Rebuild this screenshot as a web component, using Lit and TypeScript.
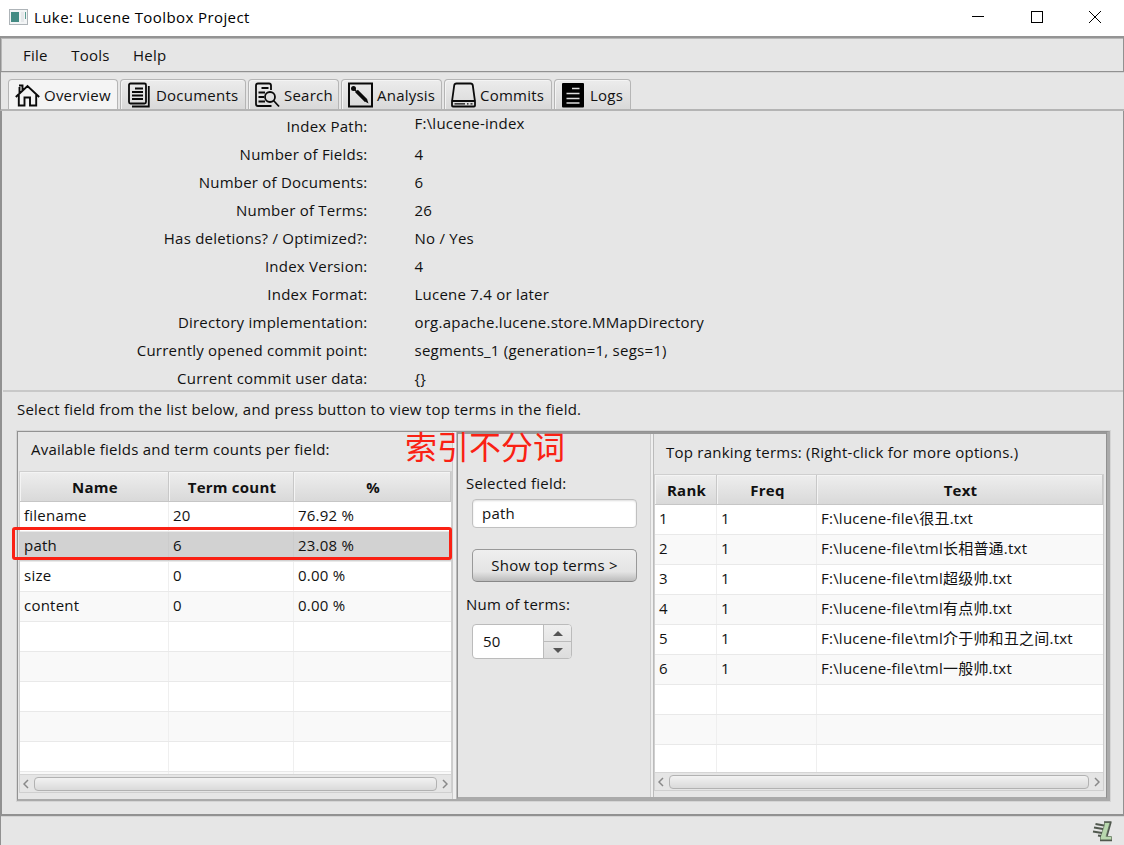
import { LitElement, html, css, svg } from "lit";
import { customElement } from "lit/decorators.js";

const house = svg`<svg width="26" height="26" viewBox="0 0 26 26" fill="none" stroke="#0a0a0a" stroke-width="1.9"><path d="M.8 15 12.500 4 24.200 15M4.500 11.500V5M7.500 8V2.500M4 3.500H8M3.800 13V23.500H9.500V15.500H15V23.500H21.200V13"/></svg>`;
const docs = svg`<svg width="26" height="26" viewBox="0 0 26 26" fill="none" stroke="#0a0a0a" stroke-width="1.8"><rect x="2" y="1.500" width="17" height="20" rx="1.500"/><path d="M21.800 4V24.500H5"/><path d="M8 6.500H16M5 10H16M5 13.500H16M5 17H16"/></svg>`;
const search = svg`<svg width="26" height="26" viewBox="0 0 26 26" fill="none" stroke="#0a0a0a" stroke-width="1.8"><path d="M16 8V3.500Q16 1.500 14 1.500H3Q1 1.500 1 3.500V22Q1 24 3 24H16.500M6.500 6H13.500M3.500 10.500H10M3.500 15H9M3.500 19.500H10"/><circle cx="15" cy="15" r="5"/><path d="M18.500 18.500 24 24.500"/></svg>`;
const analysis = svg`<svg width="26" height="26" viewBox="0 0 26 26" fill="none" stroke="#0a0a0a"><rect x="1" y="1.500" width="23" height="23" stroke-width="2"/><path d="M8.500 9 18 18.500" stroke-width="3.800"/><path d="M16 19 20.500 21.500 19 17Z" fill="#0a0a0a" stroke="none"/><circle cx="5.500" cy="6.500" r="2.500" fill="#0a0a0a" stroke="none"/><path d="M5.500 6.500 9 10" stroke-width="1.500"/></svg>`;
const disk = svg`<svg width="26" height="26" viewBox="0 0 26 26" fill="none" stroke="#0a0a0a" stroke-width="1.8"><path d="M1 19.500 3.200 3.500Q3.500 1.500 5.500 1.500H19.500Q21.500 1.500 21.800 3.500L24 19.500"/><rect x="1" y="19" width="23" height="5.500" rx="1"/><path d="M3.500 21.800H14M16 21.800H17.500M19.500 21.800H21.500" stroke-width="1.300"/></svg>`;
const logs = svg`<svg width="26" height="26" viewBox="0 0 26 26"><rect x="1" y="1" width="22" height="24.500" rx="1" fill="#000"/><path d="M11 6.500H18.500M5.500 11.500H18.500M5.500 16.500H18.500M5.500 21H18.500" stroke="#ddd" stroke-width="1.500"/></svg>`;

const tabs: [string, unknown, number][] = [
  ["Overview", house, 110], ["Documents", docs, 126], ["Search", search, 91],
  ["Analysis", analysis, 101], ["Commits", disk, 108], ["Logs", logs, 77],
];
const info = [
  ["Index Path:", "F:\\lucene-index"], ["Number of Fields:", "4"], ["Number of Documents:", "6"],
  ["Number of Terms:", "26"], ["Has deletions? / Optimized?:", "No / Yes"], ["Index Version:", "4"],
  ["Index Format:", "Lucene 7.4 or later"], ["Directory implementation:", "org.apache.lucene.store.MMapDirectory"],
  ["Currently opened commit point:", "segments_1 (generation=1, segs=1)"], ["Current commit user data:", "{}"],
];
const fields = [["filename", "20", "76.92 %"], ["path", "6", "23.08 %"], ["size", "0", "0.00 %"], ["content", "0", "0.00 %"]];
const terms = ["很丑", "tml长相普通", "tml超级帅", "tml有点帅", "tml介于帅和丑之间", "tml一般帅"].map((n, i) => [String(i + 1), "1", `F:\\lucene-file\\${n}.txt`]);

@customElement("app-root")
export class AppRoot extends LitElement {
  static styles = css`
    :host { display: block; width: 1124px; height: 845px; overflow: hidden; background: #e6e6e6; color: #111;
      font: 15px/20px "Open Sans", "Noto Sans CJK SC", sans-serif; letter-spacing: .23px; }
    * { box-sizing: border-box; }
    svg { display: block; flex: none; }
    .app { height: 845px; display: flex; flex-direction: column; white-space: nowrap; }
    .title { height: 36px; background: #fff; display: flex; align-items: center; padding: 0 23px 2px 9px; gap: 6px; color: #000; letter-spacing: .41px; }
    .title span { flex: 1; }
    .controls { display: flex; gap: 46.5px; }
    .menu { height: 36px; border: 1px solid #919191; border-top: 2px solid #949494; box-shadow: inset 1px 1px #b8b8b8; display: flex; align-items: center; gap: 23.5px; padding-left: 22px; }
    .tabs { height: 39px; border-left: 1px solid #919191; border-bottom: 2px solid #b4b4b4; display: flex; align-items: flex-end; gap: 2px; padding-left: 7px; box-shadow: inset 0 1px #d4d4d4; }
    .tab { height: 30px; border: 1px solid #b5b5b5; border-bottom: 0; border-radius: 4px 4px 0 0; background: linear-gradient(#ececec, #d9d9d9); box-shadow: inset 1px 1px #f4f4f4; display: flex; align-items: center; gap: 3px; padding: 1px 0 0 6px; }
    .tab.on { background: #f4f4f4; }
    .page { height: 704px; border: 1px solid #919191; border-top: 0; border-left-width: 2px; display: flex; flex-direction: column; padding-left: 1px; }
    .info { height: 281px; border-bottom: 2px solid #c8c8c8; padding-top: 1px; }
    .line { height: 28px; display: grid; grid-template-columns: 364.5px 1fr; column-gap: 47px; line-height: 28px; }
    .line > :first-child { text-align: right; }
    .line:first-child > :last-child { line-height: 23px; }
    .hint { height: 39px; padding: 7px 0 0 14px; }
    .split { height: 370px; width: 1093px; margin-left: 14px; border: 1px solid #929292; border-right: 3px solid #aaa; border-bottom: 2px solid #aaa; display: flex; position: relative; outline: 1px solid #d5d5d5; }
    .left { width: 434px; flex: none; padding-left: 1px; }
    .cap { height: 39px; padding: 7px 0 0 12px; }
    .divider { width: 5px; flex: none; border-left: 1px solid #ccc; border-right: 1px solid #bbb; background: #efefef; }
    .right { width: 650px; flex: none; border: 1px solid #909090; border-top: 2px solid #999; border-bottom: 2px solid #aaa; display: flex; }
    .mid { width: 192px; flex: none; padding: 39px 0 0 8px; }
    .right .divider { width: 4px; }
    .field { width: 165px; height: 29px; margin: 6px 0 21px 6px; border: 1px solid #c0c0c0; border-radius: 4px; background: #fff; box-shadow: inset 0 1px 2px #ddd; padding: 3px 9px; }
    .button { width: 165px; height: 33px; margin: 0 0 12px 6px; border: 1.5px solid #999; border-bottom-color: #888; border-radius: 5px; background: linear-gradient(#efefef, #e4e4e4 70%, #bcbcbc); text-align: center; line-height: 30px; }
    .spin { width: 100px; height: 35px; margin: 10px 0 0 6px; border: 1px solid #bbb; border-radius: 4px; display: grid; grid-template-columns: 70px 28px; background: #fff; line-height: 33px; overflow: hidden; }
    .spin > span { padding-left: 10px; }
    .steps { border-left: 1px solid #bbb; display: grid; grid-template-rows: 17px 16px; background: linear-gradient(#eee, #ddd); }
    .steps span { display: flex; align-items: center; justify-content: center; }
    .steps span:first-child { border-bottom: 1px solid #bbb; }
    .ranking { width: 452px; flex: none; }
    .ranking .cap { height: 40px; padding: 8px 0 0 12px; }
    .table { border: 1px solid #cfcfcf; background: #fff; overflow: hidden; display: flex; flex-direction: column; }
    .tl { width: 433px; height: 322px; --cols: 149px 125px 157px; }
    .tr { width: 450px; height: 317px; --cols: 62px 100px 286px; }
    .row, .head { display: grid; grid-template-columns: var(--cols); height: 30px; flex: none; }
    .row { border-bottom: 1px solid #e9e9e9; line-height: 26px; }
    .row:nth-child(even) { background: #f9f9f9; }
    .rows .row.on { background: #d2d2d2; }
    .row span { padding-left: 4px; border-right: 1px solid #efefef; }
    .row.on span { border-color: #ccc; }
    .row span:last-child { border: 0; }
    .head { background: linear-gradient(#eee, #d9d9d9); border-bottom: 1px solid #c6c6c6; font-weight: 700; text-align: center; line-height: 28px; }
    .head span { border-right: 1px solid #c8c8c8; box-shadow: inset 1px 1px #f4f4f4; padding: 1px 0 0 2px; }
    .rows { flex: 1; overflow: hidden; }
    .bar { height: 18px; flex: none; border-top: 1px solid #d5d5d5; background: #e5e5e5; display: flex; align-items: center; justify-content: space-between; padding: 0 3px; }
    .thumb { height: 14px; flex: 1; margin: 0 5px; border: 1px solid #b2b2b2; border-radius: 4px; background: linear-gradient(#f2f2f2, #dadada); }
    .mark { position: absolute; left: -6px; top: 95px; width: 440px; height: 33px; border: 3px solid #fa2114; border-radius: 3px; }
    .note { position: absolute; left: 387px; top: -7px; color: #fa2114; font: 400 32px/40px "Noto Sans CJK SC", sans-serif; letter-spacing: 0; }
    .status { height: 30px; border-top: 1px solid #929292; border-left: 1px solid #919191; box-shadow: inset 0 1px #d4d4d4; display: flex; justify-content: flex-end; padding: 4px 10px 0 0; }
  `;

  table(side: string, heads: string[], data: string[][], count: number, selected: number) {
    return html`<div class="table ${side}">
      <div class="head">${heads.map((h) => html`<span>${h}</span>`)}</div>
      <div class="rows">${Array.from({ length: count }, (_, i) => html`<div class="row ${i === selected ? "on" : ""}">${(data[i] ?? ["", "", ""]).map((c) => html`<span>${c}</span>`)}</div>`)}</div>
      <div class="bar">
        <svg width="6" height="10" fill="none" stroke="#888" stroke-width="1.500"><path d="M5 1 1 5 5 9"/></svg>
        <div class="thumb"></div>
        <svg width="6" height="10" fill="none" stroke="#888" stroke-width="1.500"><path d="M1 1 5 5 1 9"/></svg>
      </div>
    </div>`;
  }

  render() {
    return html`<div class="app">
      <div class="title">
        <svg width="19" height="16"><rect x=".5" y=".5" width="18" height="15" fill="#f3f5f6" stroke="#aeb4b8"/><rect x="2" y="3" width="8" height="10" fill="#438b83"/><rect x="12" y="3" width="3" height="10" fill="#e5e8ea"/><rect x="16" y="3" width="1" height="7" fill="#5b9c91"/></svg>
        <span>Luke: Lucene Toolbox Project</span>
        <div class="controls">
          <svg width="12" height="12"><path d="M0 5.500H12" stroke="#000"/></svg>
          <svg width="12" height="12"><rect x=".5" y=".5" width="11" height="11" fill="none" stroke="#000"/></svg>
          <svg width="12" height="12"><path d="M0 0 12 12M12 0 0 12" stroke="#000"/></svg>
        </div>
      </div>
      <div class="menu"><span>File</span><span>Tools</span><span>Help</span></div>
      <div class="tabs">${tabs.map(([n, icon, w], i) => html`<div class="tab ${i === 0 ? "on" : ""}" style="width:${w}px">${icon}<span>${n}</span></div>`)}</div>
      <div class="page">
        <div class="info">${info.map(([a, b]) => html`<div class="line"><span>${a}</span><span>${b}</span></div>`)}</div>
        <div class="hint">Select field from the list below, and press button to view top terms in the field.</div>
        <div class="split">
          <div class="left"><div class="cap">Available fields and term counts per field:</div>${this.table("tl", ["Name", "Term count", "%"], fields, 10, 1)}</div>
          <div class="divider"></div>
          <div class="right">
            <div class="mid">
              <div>Selected field:</div><div class="field">path</div>
              <div class="button">Show top terms &gt;</div>
              <div>Num of terms:</div>
              <div class="spin"><span>50</span><div class="steps"><span><svg width="10" height="5"><path d="M0 5H10L5 0Z" fill="#555"/></svg></span><span><svg width="10" height="5"><path d="M0 0H10L5 5Z" fill="#555"/></svg></span></div></div>
            </div>
            <div class="divider"></div>
            <div class="ranking"><div class="cap">Top ranking terms: (Right-click for more options.)</div>${this.table("tr", ["Rank", "Freq", "Text"], terms, 9, -1)}</div>
          </div>
          <div class="mark"></div><div class="note">索引不分词</div>
        </div>
      </div>
      <div class="status"><svg width="22" height="22" viewBox="0 0 22 22"><path d="M12.500 2.500H18L14 16.500H19.500V20H8.500V16.500L12.500 5Z" fill="#b9d8ae" stroke="#7d9077" stroke-width="1"/><path d="M19 2 15 16M12 2H19.500M8 20.500H20" stroke="#50584e" stroke-width="1.500"/><path d="M3.500 4 12 5.500M2 7.500 11 9M1 11.500 10 13M6 15.500 9 16" stroke="#50584e" stroke-width="2"/></svg></div>
    </div>`;
  }
}
